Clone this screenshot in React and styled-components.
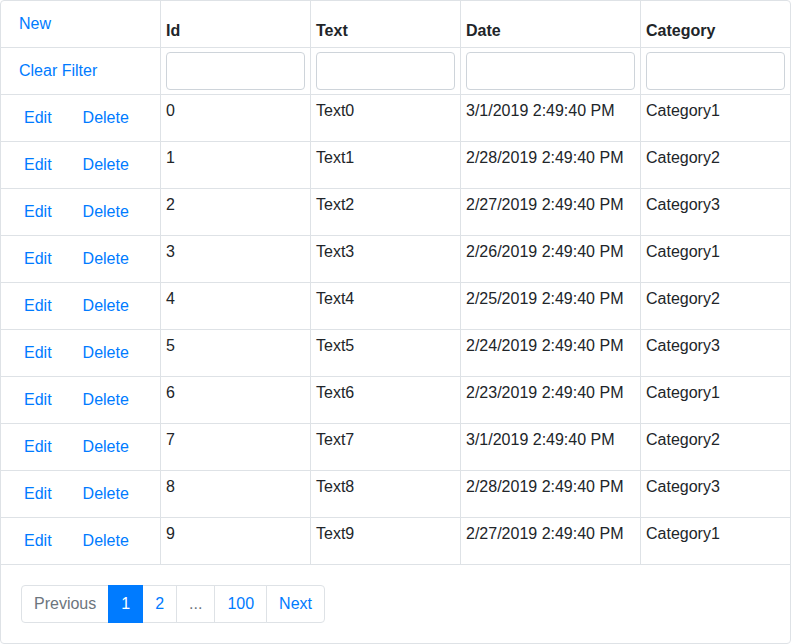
import React from "react";
import styled, { createGlobalStyle } from "styled-components";

const Global = createGlobalStyle`
  * { box-sizing: border-box; }
  html, body { margin: 0; padding: 0; background: #fff; }
  body {
    font-family: "Liberation Sans", Arial, sans-serif;
    font-size: 16px;
    line-height: 1.5;
    color: #212529;
  }
`;

const Card = styled.div`
  width: 791px;
  height: 644px;
  border: 1px solid #dee2e6;
  border-radius: 4px;
  display: flex;
  flex-direction: column;
  overflow: hidden;
`;

const Table = styled.table`
  width: 789px;
  table-layout: fixed;
  border-collapse: separate;
  border-spacing: 0;
`;

const Cell = styled.td`
  padding: 4px 5px;
  border-bottom: 1px solid #dee2e6;
  border-right: ${(p) => (p.$last ? "none" : "1px solid #dee2e6")};
  vertical-align: ${(p) => p.$valign || "top"};
  height: 47px;
  text-align: left;
  white-space: nowrap;
  overflow: hidden;
`;

const HeadCell = styled(Cell).attrs({ as: "th" })`
  font-weight: bold;
  vertical-align: bottom;
`;

const LinkButton = styled.button`
  display: inline-block;
  font-family: inherit;
  font-size: 16px;
  line-height: 1.5;
  padding: 6px 12px;
  border: 1px solid transparent;
  border-radius: 4px;
  background: transparent;
  color: #007bff;
  cursor: pointer;
  margin-left: ${(p) => (p.$spaced ? "5px" : "0")};
  vertical-align: middle;
`;

const FilterInput = styled.input`
  display: block;
  width: 100%;
  height: 38px;
  padding: 6px 12px;
  font-family: inherit;
  font-size: 16px;
  border: 1px solid #ced4da;
  border-radius: 4px;
  background: #fff;
  color: #495057;
`;

const Footer = styled.div`
  padding: 20px;
`;

const Pager = styled.ul`
  display: inline-flex;
  list-style: none;
  margin: 0;
  padding: 0;
  border-radius: 4px;
`;

const PageItem = styled.li`
  display: block;
  padding: 8px 12px;
  line-height: 20px;
  font-size: 16px;
  margin-left: ${(p) => (p.$first ? "0" : "-1px")};
  border: 1px solid ${(p) => (p.$active ? "#007bff" : "#dee2e6")};
  background: ${(p) => (p.$active ? "#007bff" : "#fff")};
  color: ${(p) => (p.$active ? "#fff" : p.$muted ? "#6c757d" : "#007bff")};
  border-radius: ${(p) =>
    p.$first ? "4px 0 0 4px" : p.$lastItem ? "0 4px 4px 0" : "0"};
  position: relative;
  z-index: ${(p) => (p.$active ? 1 : 0)};
`;

const dates = [
  "3/1/2019", "2/28/2019", "2/27/2019", "2/26/2019", "2/25/2019",
  "2/24/2019", "2/23/2019", "3/1/2019", "2/28/2019", "2/27/2019",
];

const rows = dates.map((d, i) => ({
  id: i,
  text: `Text${i}`,
  date: `${d} 2:49:40 PM`,
  category: `Category${(i % 3) + 1}`,
}));

const widths = [160, 150, 150, 180, 149];

export default function App() {
  return (
    <>
      <Global />
      <Card>
        <Table>
          <colgroup>
            {widths.map((w, i) => (
              <col key={i} style={{ width: w }} />
            ))}
          </colgroup>
          <thead>
            <tr>
              <HeadCell>
                <LinkButton>New</LinkButton>
              </HeadCell>
              <HeadCell>Id</HeadCell>
              <HeadCell>Text</HeadCell>
              <HeadCell>Date</HeadCell>
              <HeadCell $last>Category</HeadCell>
            </tr>
            <tr>
              <Cell $valign="top">
                <LinkButton>Clear Filter</LinkButton>
              </Cell>
              <Cell><FilterInput /></Cell>
              <Cell><FilterInput /></Cell>
              <Cell><FilterInput /></Cell>
              <Cell $last><FilterInput /></Cell>
            </tr>
          </thead>
          <tbody>
            {rows.map((r) => (
              <tr key={r.id}>
                <Cell>
                  <LinkButton $spaced>Edit</LinkButton>
                  <LinkButton $spaced>Delete</LinkButton>
                </Cell>
                <Cell>{r.id}</Cell>
                <Cell>{r.text}</Cell>
                <Cell>{r.date}</Cell>
                <Cell $last>{r.category}</Cell>
              </tr>
            ))}
          </tbody>
        </Table>
        <Footer>
          <Pager>
            <PageItem $first $muted>Previous</PageItem>
            <PageItem $active>1</PageItem>
            <PageItem>2</PageItem>
            <PageItem $muted>...</PageItem>
            <PageItem>100</PageItem>
            <PageItem $lastItem>Next</PageItem>
          </Pager>
        </Footer>
      </Card>
    </>
  );
}
